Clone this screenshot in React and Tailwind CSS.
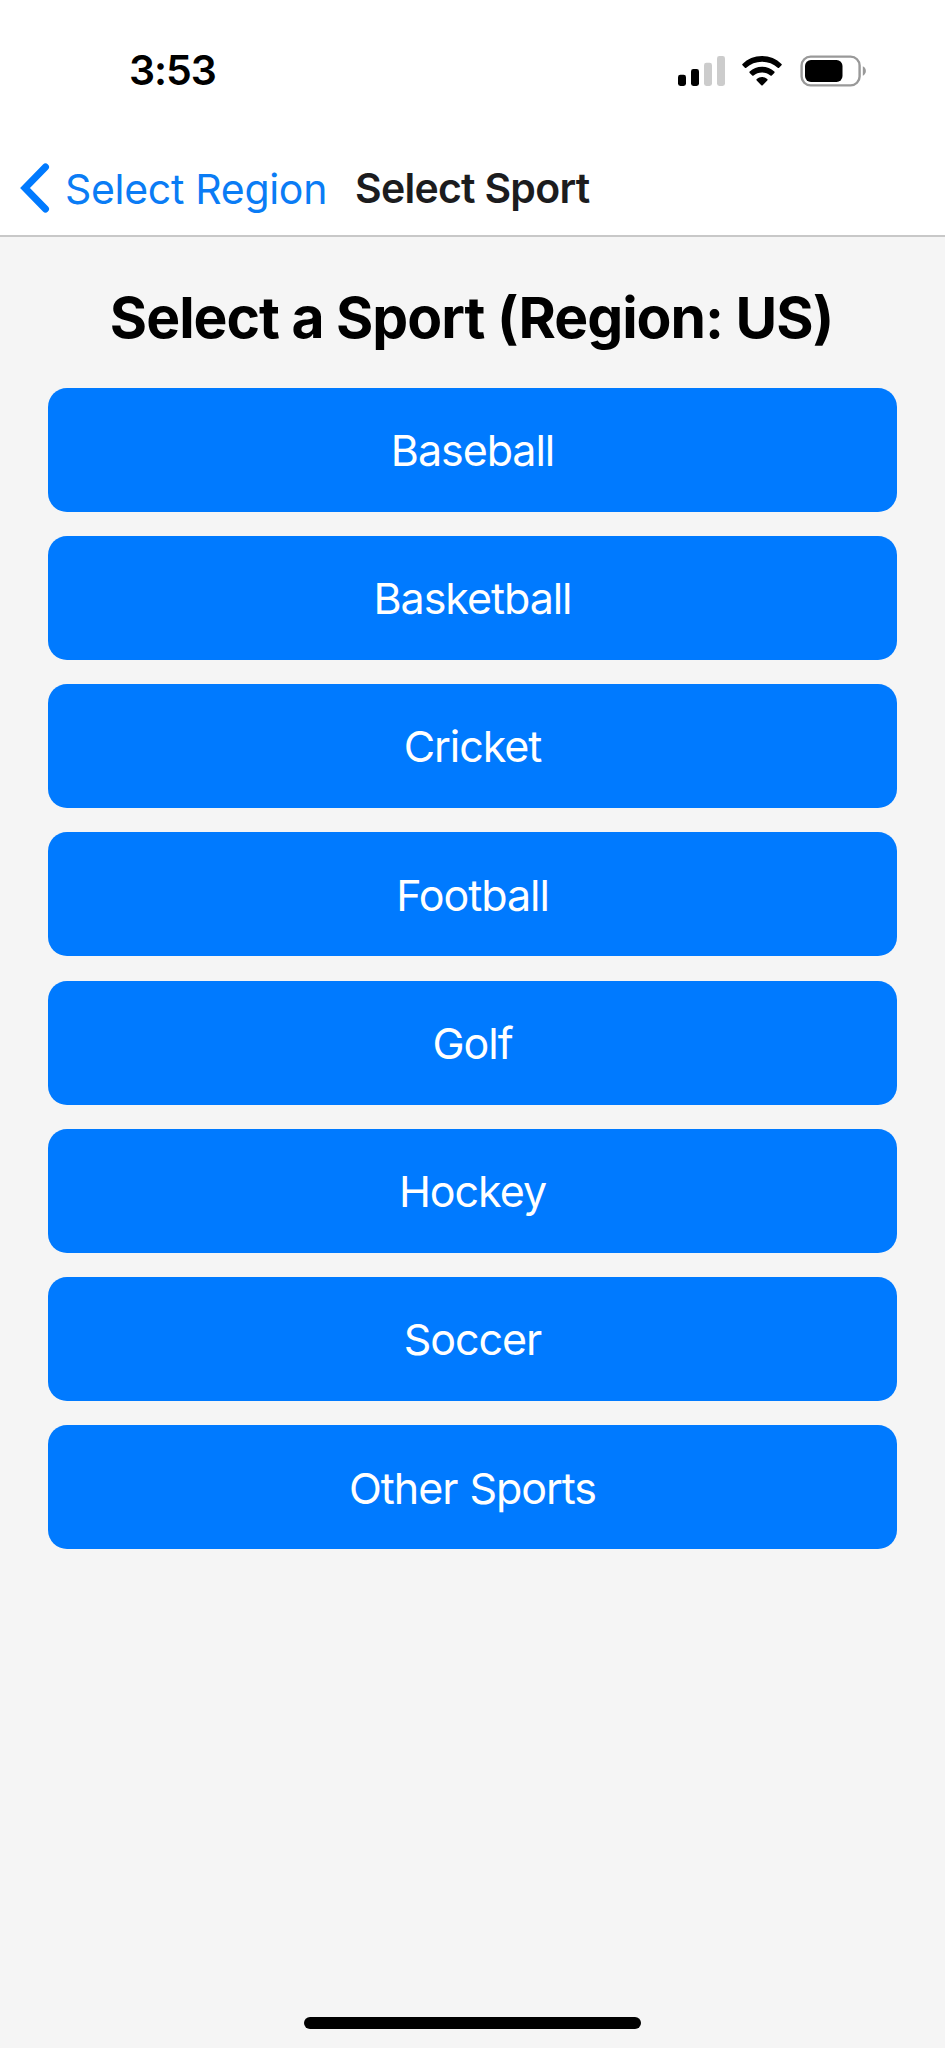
const sports = [
  'Baseball',
  'Basketball',
  'Cricket',
  'Football',
  'Golf',
  'Hockey',
  'Soccer',
  'Other Sports',
];

function SignalIcon() {
  return (
    <svg width="47" height="30" viewBox="0 0 47 30">
      <rect x="0" y="18.8" width="8" height="11.2" rx="2.4" fill="#000" />
      <rect x="13" y="13" width="8" height="17" rx="2.4" fill="#000" />
      <rect x="26" y="6.8" width="8" height="23.2" rx="2.4" fill="#ccc" />
      <rect x="39" y="0" width="8" height="30" rx="2.4" fill="#ccc" />
    </svg>
  );
}

function WifiIcon() {
  return (
    <svg width="40" height="30" viewBox="0 0 40 30">
      <path d="M20 0C27.6 0 34.4 3 39.5 7.900Q40.200 8.600 39.500 9.300L37.100 11.700Q36.400 12.400 35.700 11.700C31.600 7.900 26.100 5.700 20 5.700S8.400 7.900 4.300 11.700Q3.600 12.400 2.900 11.700L.5 9.300Q-.2 8.600 .5 7.900C5.600 3 12.400 0 20 0Z" />
      <path d="M20 10.800C24.800 10.800 29 12.600 32.300 15.600Q33 16.300 32.300 17L29.800 19.500Q29.100 20.100 28.400 19.500C26.100 17.500 23.200 16.400 20 16.400S13.900 17.500 11.600 19.500Q10.900 20.100 10.200 19.500L7.700 17Q7 16.300 7.700 15.600C11 12.600 15.200 10.800 20 10.800Z" />
      <path d="M20 21.100C22 21.100 23.800 21.900 25.200 23.100Q26 23.800 25.300 24.500L20.700 29.200Q20 29.900 19.300 29.200L14.700 24.500Q14 23.800 14.800 23.100C16.200 21.900 18 21.100 20 21.100Z" />
    </svg>
  );
}

function BatteryIcon() {
  return (
    <svg width="66" height="32" viewBox="0 0 66 32">
      <rect x="1.600" y="1.600" width="58" height="28.800" rx="9" fill="none" stroke="#999" strokeWidth="2.400" />
      <rect x="5" y="5" width="37.500" height="22" rx="6" fill="#000" />
      <path d="M62.800 11.300V20.700C64.600 20 65.900 18.100 65.900 16S64.600 12 62.800 11.300Z" fill="#999" />
    </svg>
  );
}

function StatusBar() {
  return (
    <div className="flex h-[141px] items-center pl-[129px] pr-[79px]">
      <span className="text-[41px] leading-none font-semibold tracking-[-1.1px]">3:53</span>
      <div className="ml-auto flex items-center">
        <SignalIcon />
        <div className="ml-[17px] mr-[18px]">
          <WifiIcon />
        </div>
        <BatteryIcon />
      </div>
    </div>
  );
}

function NavBar() {
  return (
    <nav className="flex h-[94px] items-center pl-[20px] text-[41px] leading-[48px]">
      <button className="flex items-center text-[#0a7cf5]">
        <svg width="30" height="50" viewBox="0 0 30 50" fill="none">
          <path d="M25.500 4L5 25L25.500 46" stroke="#007aff" strokeWidth="7" strokeLinecap="round" />
        </svg>
        <span className="ml-[15px] pt-px tracking-[-0.3px] whitespace-nowrap">Select Region</span>
      </button>
      <h1 className="ml-[28px] font-semibold tracking-[-0.75px] whitespace-nowrap text-[#1c1c1e]">
        Select Sport
      </h1>
    </nav>
  );
}

export default function App() {
  return (
    <div className="flex h-[2048px] w-[945px] flex-col bg-[#f5f5f5] font-['Inter',sans-serif] text-black">
      <header className="border-b-2 border-[#c8c8c8] bg-white">
        <StatusBar />
        <NavBar />
      </header>
      <main className="flex flex-1 flex-col px-[48px] pt-[46px]">
        <h2 className="pr-[2px] text-center text-[57px] leading-[70px] font-bold tracking-[-1px] whitespace-nowrap">
          Select a Sport (Region: US)
        </h2>
        <div className="mt-[34.500px] flex flex-col gap-[24.250px]">
          {sports.map((sport) => (
            <button
              key={sport}
              className="flex h-[124px] items-center justify-center rounded-[19px] bg-[#007aff] pt-px text-[43px] tracking-[-1.05px] text-white [word-spacing:1px]"
            >
              {sport}
            </button>
          ))}
        </div>
      </main>
      <div className="mb-[19px] h-[12px] w-[337px] self-center rounded-full bg-black" />
    </div>
  );
}
